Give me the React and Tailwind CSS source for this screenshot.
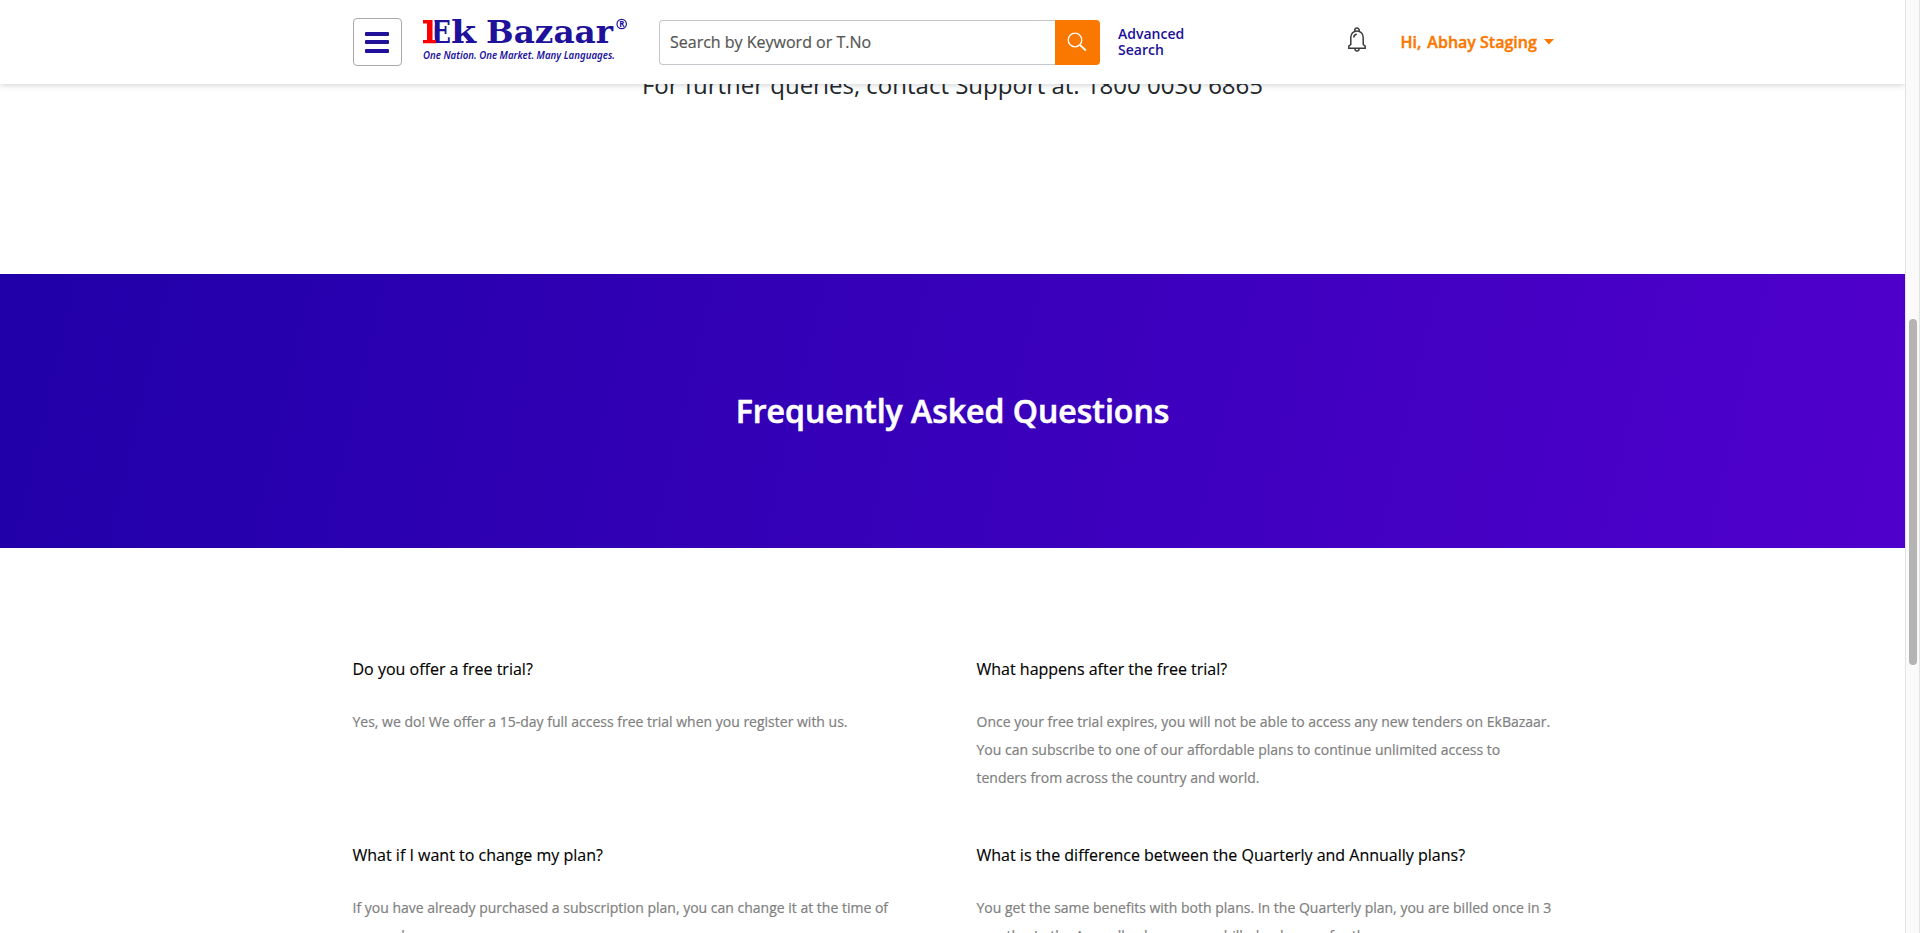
import React from 'react';

const faqs = [
  {
    q: 'Do you offer a free trial?',
    a: ['Yes, we do! We offer a 15-day full access free trial when you register with us.'],
  },
  {
    q: 'What happens after the free trial?',
    a: [
      'Once your free trial expires, you will not be able to access any new tenders on EkBazaar.',
      'You can subscribe to one of our affordable plans to continue unlimited access to',
      'tenders from across the country and world.',
    ],
  },
  {
    q: 'What if I want to change my plan?',
    a: [
      'If you have already purchased a subscription plan, you can change it at the time of',
      'renewal.',
    ],
  },
  {
    q: 'What is the difference between the Quarterly and Annually plans?',
    a: [
      'You get the same benefits with both plans. In the Quarterly plan, you are billed once in 3',
      'months. In the Annually plan, you are billed only once for the year.',
    ],
  },
];

function Logo() {
  return (
    <svg width="210" height="56" viewBox="0 0 210 56" className="block shrink-0">
      <g fontFamily="'DejaVu Serif', serif" fontWeight="700" fontSize="31" fill="#20119b">
        <text x="11" y="33" textLength="20" lengthAdjust="spacingAndGlyphs">E</text>
        <text x="31" y="33" textLength="25" lengthAdjust="spacingAndGlyphs">k</text>
        <text x="66" y="33" textLength="127" lengthAdjust="spacingAndGlyphs">Bazaar</text>
      </g>
      <path d="M2.500 9.500h12V16h-1v12h1v6h-12z" fill="#fff" />
      <path d="M3 10h9.500v20h3.500v3.200H3V30h4V13.500H3z" fill="#f00" />
      <circle cx="201.700" cy="14" r="4.700" fill="none" stroke="#20119b" strokeWidth="1.200" />
      <text x="199.300" y="16.900" fontSize="8" fontFamily="'Open Sans', sans-serif" fontWeight="700" fill="#20119b">R</text>
      <text x="3" y="48.500" fontSize="10" fontFamily="'Noto Sans', sans-serif" fontStyle="italic" fontWeight="600" fill="#20119b" textLength="192" lengthAdjust="spacingAndGlyphs">One Nation. One Market. Many Languages.</text>
    </svg>
  );
}

function BellIcon() {
  return (
    <svg width="20" height="26" viewBox="0 0 20 26" fill="none" stroke="#3b3b3b" strokeWidth="1.500" className="block">
      <path d="M7.800 4V3.300a2.200 2.200 0 0 1 4.400 0V4" />
      <path d="M3.800 17.500v-7.300a6.200 6.200 0 0 1 12.400 0v7.300l2 1.700v2.100H1.800v-2.100z" />
      <path d="M6.800 10.500a3.200 3.200 0 0 1 3-3.300" />
      <path d="M8 22a2 2 0 0 0 4 0" />
    </svg>
  );
}

function Header() {
  return (
    <header className="relative z-10 flex h-[84px] shrink-0 bg-white pl-[353px] shadow-[0_1px_6px_rgba(60,70,80,0.250)]">
      <button className="mt-[18px] flex h-[48px] w-[49px] flex-col items-start justify-center gap-[4.500px] rounded-[4px] border border-[#a9a9a9] pl-[11px]">
        <span className="h-[4px] w-[24px] rounded-[1px] bg-[#20119b]" />
        <span className="h-[4px] w-[24px] rounded-[1px] bg-[#20119b]" />
        <span className="h-[4px] w-[24px] rounded-[1px] bg-[#20119b]" />
      </button>
      <div className="ml-[18px] mt-[10px] w-[210px]"><Logo /></div>
      <div className="ml-[29px] mt-[20px] flex h-[45px] w-[441px]">
        <div className="flex flex-1 items-center rounded-l-[4px] border border-r-0 border-[#c4c8cc] pb-[2px] pl-[10px] text-[16px] text-[#555] [-webkit-text-stroke:0.200px]">
          Search by Keyword or T.No
        </div>
        <div className="flex w-[45px] items-center justify-center rounded-r-[4px] bg-[#fa7800] pr-[2px] pb-[2px]">
          <svg width="20" height="20" viewBox="0 0 20 20" fill="none" stroke="#fff" strokeWidth="1.300">
            <circle cx="8" cy="8" r="6.800" />
            <path d="M12.900 12.900 18.800 18.500" strokeWidth="1.900" />
          </svg>
        </div>
      </div>
      <div className="ml-[18px] mt-[26px] w-[90px] text-[14px] font-semibold leading-[16px] text-[#20119b]">Advanced Search</div>
      <div className="ml-[139px] mt-[27px]"><BellIcon /></div>
      <div className="ml-[33.500px] flex h-[84px] items-center text-[16px] font-semibold text-[#fa7800] [-webkit-text-stroke:0.400px]">
        <span>Hi,</span>
        <span className="ml-[6px]">Abhay Staging</span>
        <svg width="10" height="6" viewBox="0 0 10 6" className="ml-[7px]"><path d="M0 0h10L5 5.500z" fill="#fa7800" /></svg>
      </div>
    </header>
  );
}

export default function App() {
  return (
    <div className="flex h-[933px] w-[1920px] overflow-hidden bg-white font-['Open_Sans',sans-serif]">
      <main className="flex w-[1905px] flex-col overflow-hidden">
        <Header />
        <div className="flex h-[190px] shrink-0 justify-center">
          <p className="-mt-[17px] text-[24px] leading-[36px] text-[#212529]">For further queries, contact Support at: 1800 0030 6865</p>
        </div>
        <section className="flex h-[274px] shrink-0 items-center justify-center bg-[linear-gradient(103deg,#2000a8_0%,#5000cc_100%)]">
          <h1 className="text-[32px] font-semibold leading-[48px] text-white [-webkit-text-stroke:0.600px]">Frequently Asked Questions</h1>
        </section>
        <section className="grid shrink-0 grid-cols-[594px_600px] gap-x-[30px] pl-[352.500px] pt-[108px]">
          {faqs.map((f) => (
            <div key={f.q} className="h-[186px]">
              <h2 className="text-[16px] leading-[26px] text-black [-webkit-text-stroke:0.150px]">{f.q}</h2>
              <p className="mt-[26px] whitespace-nowrap text-[14px] leading-[28px] text-[#808080] [-webkit-text-stroke:0.200px]">
                {f.a.map((l) => (
                  <span key={l} className="block">{l}</span>
                ))}
              </p>
            </div>
          ))}
        </section>
      </main>
      <aside className="flex w-[15px] flex-col items-center border-x border-[#e2e2e2] bg-[#fafafa] pt-[319px]">
        <div className="h-[346px] w-[8px] rounded-full bg-[#b4b4b4]" />
      </aside>
    </div>
  );
}
